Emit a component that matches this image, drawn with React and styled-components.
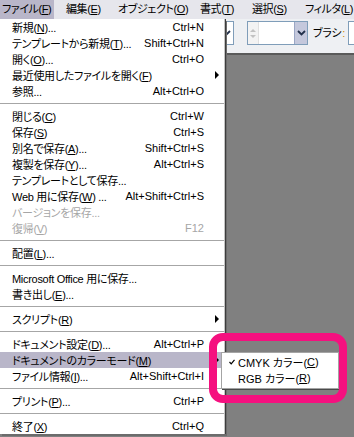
import React from 'react';
import styled, { createGlobalStyle } from 'styled-components';

const GlobalStyle = createGlobalStyle`
  html, body { margin: 0; padding: 0; }
  body {
    font-family: "Liberation Sans", "Noto Sans CJK JP", sans-serif;
    font-size: 11px;
    color: #000;
  }
  * { box-sizing: border-box; }
`;

// name, mnemonic, slot width (highlight box for the open one)
const menuBar = [
  ['ファイル', 'F', 54],
  ['編集', 'E', 42],
  ['オブジェクト', 'O', 72],
  ['書式', 'T', 42],
  ['選択', 'S', 43],
  ['フィルタ', 'L', 60],
];

const fileMenu = [
  { label: '新規', key: 'N', tail: '...', shortcut: 'Ctrl+N' },
  { label: 'テンプレートから新規', key: 'T', tail: '...', shortcut: 'Shift+Ctrl+N' },
  { label: '開く', key: 'O', tail: '...', shortcut: 'Ctrl+O' },
  { label: '最近使用したファイルを開く', key: 'F', sub: true },
  { label: '参照...', shortcut: 'Alt+Ctrl+O' },
  'sep',
  { label: '閉じる', key: 'C', shortcut: 'Ctrl+W' },
  { label: '保存', key: 'S', shortcut: 'Ctrl+S' },
  { label: '別名で保存', key: 'A', tail: '...', shortcut: 'Shift+Ctrl+S' },
  { label: '複製を保存', key: 'Y', tail: '...', shortcut: 'Alt+Ctrl+S' },
  { label: 'テンプレートとして保存...' },
  { label: 'Web 用に保存', key: 'W', tail: ' ...', shortcut: 'Alt+Shift+Ctrl+S' },
  { label: 'バージョンを保存...', disabled: true },
  { label: '復帰', key: 'V', shortcut: 'F12', disabled: true },
  'sep',
  { label: '配置', key: 'L', tail: '...' },
  'sep',
  { label: 'Microsoft Office 用に保存...' },
  { label: '書き出し', key: 'E', tail: '...' },
  'sep',
  { label: 'スクリプト', key: 'R', sub: true },
  'sep',
  { label: 'ドキュメント設定', key: 'D', tail: '...', shortcut: 'Alt+Ctrl+P' },
  { label: 'ドキュメントのカラーモード', key: 'M', sub: true, active: true },
  { label: 'ファイル情報', key: 'I', tail: '...', shortcut: 'Alt+Shift+Ctrl+I' },
  'sep',
  { label: 'プリント', key: 'P', tail: '...', shortcut: 'Ctrl+P' },
  'sep',
  { label: '終了', key: 'X', shortcut: 'Ctrl+Q' },
];

const Mnemonic = ({ k }) => (
  <>
    (<u>{k}</u>)
  </>
);

const Chevron = () => (
  <svg width="9" height="6" viewBox="0 0 9 6">
    <path d="M1 1 L4.5 4.5 L8 1" fill="none" stroke="#22304a" strokeWidth="1.8" />
  </svg>
);

const Check = () => (
  <svg width="6" height="6" viewBox="0 0 6 6">
    <path d="M0.5 3 L2.2 4.8 L5.5 0.8" fill="none" stroke="#000" strokeWidth="1.2" />
  </svg>
);

const App = () => (
  <Screen>
    <GlobalStyle />
    <MenuBar>
      {menuBar.map(([name, k, w], i) => (
        <BarItem key={name} $open={i === 0} $width={w}>
          {name}
          <Mnemonic k={k} />
        </BarItem>
      ))}
    </MenuBar>

    <Toolbar>
      <Combo $width={60}>
        <ComboField />
        <DropButton>
          <Chevron />
        </DropButton>
      </Combo>
      <Combo $width={61} $before={8}>
        <Spinner>
          <SpinArrow $up />
          <SpinArrow />
        </Spinner>
        <ComboField />
        <DropButton $tinted>
          <Chevron />
        </DropButton>
      </Combo>
      <ToolLabel>
        ブラシ<Colon>:</Colon>
      </ToolLabel>
      <Combo $width={40} $before={-2}>
        <ComboField />
      </Combo>
    </Toolbar>

    <Workspace />

    <DropMenu>
      {fileMenu.map((item, i) =>
        item === 'sep' ? (
          <Separator key={i} />
        ) : (
          <Item key={i} $active={item.active} $disabled={item.disabled}>
            <Label>
              {item.label}
              {item.key && <Mnemonic k={item.key} />}
              {item.tail}
            </Label>
            {item.shortcut && <Shortcut>{item.shortcut}</Shortcut>}
            <ArrowCell>{item.sub && <Triangle />}</ArrowCell>
          </Item>
        )
      )}
    </DropMenu>

    <SubMenu>
      <SubItem>
        <CheckCell>
          <Check />
        </CheckCell>
        CMYK カラー<Mnemonic k="C" />
      </SubItem>
      <SubItem>
        <CheckCell />
        RGB カラー<Mnemonic k="R" />
      </SubItem>
    </SubMenu>

    <Highlight />
  </Screen>
);

export default App;

const Screen = styled.div`
  position: relative;
  width: 354px;
  height: 437px;
  overflow: hidden;
  display: flex;
  flex-direction: column;
  background: #808080;
  font-feature-settings: "palt" 1;
`;

const MenuBar = styled.div`
  height: 19px;
  flex: none;
  display: flex;
  gap: 10px;
  background: #e6e6ec;
  white-space: nowrap;
`;

const BarItem = styled.div`
  flex: none;
  width: ${(p) => p.$width}px;
  padding-left: 2px;
  line-height: 19px;
  font-size: 11px;
  letter-spacing: -0.4px;
  background: ${(p) => (p.$open ? '#b9b6c9' : 'transparent')};
`;

const Toolbar = styled.div`
  height: 36px;
  flex: none;
  display: flex;
  align-items: flex-start;
  gap: 5px;
  padding: 2px 0 0 174px;
  background: #eef0f3;
  border-bottom: 2px solid #5a5a5a;
  white-space: nowrap;
`;

const Combo = styled.div`
  flex: none;
  width: ${(p) => p.$width}px;
  height: 24px;
  margin-left: ${(p) => p.$before || 0}px;
  display: flex;
  background: #fff;
  border: 1px solid #7f9db9;
`;

const ComboField = styled.div`
  flex: 1;
`;

const DropButton = styled.div`
  width: 13px;
  display: flex;
  align-items: center;
  justify-content: center;
  background: ${(p) => (p.$tinted ? '#c4c8dc' : '#fff')};
  border-left: ${(p) => (p.$tinted ? '1px solid #9aa6c4' : 'none')};
`;

const Spinner = styled.div`
  width: 11px;
  display: flex;
  flex-direction: column;
  justify-content: center;
  gap: 3px;
  background: #f3f3f3;
  border-right: 1px solid #e0e0e0;
`;

const SpinArrow = styled.div`
  align-self: center;
  width: 0;
  height: 0;
  border-left: 3px solid transparent;
  border-right: 3px solid transparent;
  ${(p) => (p.$up ? 'border-bottom' : 'border-top')}: 3px solid #c2c2c2;
`;

const ToolLabel = styled.div`
  flex: none;
  line-height: 24px;
  letter-spacing: -0.3px;
`;

const Colon = styled.span`
  color: #d08a00;
  margin-left: 1px;
`;

const Workspace = styled.div`
  flex: 1;
  background: #808080;
`;

const DropMenu = styled.div`
  position: absolute;
  top: 19px;
  left: 0;
  width: 225px;
  background: #fff;
  border-right: 1px solid #c4c4c4;
  box-shadow: 1px 0 0 #3c3c3c, 2px 2px 0 #6c6c6c;
  white-space: nowrap;
`;

const Item = styled.div`
  height: 16px;
  display: flex;
  align-items: center;
  padding-left: 12px;
  background: ${(p) => (p.$active ? '#b9b6c9' : 'transparent')};
  color: ${(p) => (p.$disabled ? '#a6a6a6' : '#000')};
`;

const Label = styled.span`
  flex: 1;
  letter-spacing: -0.3px;
`;

const Shortcut = styled.span`
  flex: none;
`;

const ArrowCell = styled.span`
  flex: none;
  width: 20px;
  padding-left: 11px;
  display: flex;
  align-items: center;
`;

const Triangle = styled.span`
  width: 0;
  height: 0;
  border-top: 4px solid transparent;
  border-bottom: 4px solid transparent;
  border-left: 4px solid #000;
`;

const Separator = styled.div`
  height: 9px;
  display: flex;
  align-items: center;
  &::after {
    content: '';
    flex: 1;
    border-top: 1px solid #a6a6a6;
  }
`;

const SubMenu = styled.div`
  position: absolute;
  left: 221px;
  top: 352px;
  width: 118px;
  padding: 1px 0 2px;
  background: #fff;
  border: 1px solid #a4a4a4;
  box-shadow: 1px 1px 0 #4a4a4a;
  white-space: nowrap;
`;

const SubItem = styled.div`
  height: 16px;
  display: flex;
  align-items: center;
`;

const CheckCell = styled.span`
  flex: none;
  width: 16px;
  padding-left: 7px;
  display: flex;
  align-items: center;
`;

const Highlight = styled.div`
  position: absolute;
  left: 209px;
  top: 333px;
  width: 138px;
  height: 70px;
  border: 8px solid #f5107f;
  border-radius: 14px;
`;
